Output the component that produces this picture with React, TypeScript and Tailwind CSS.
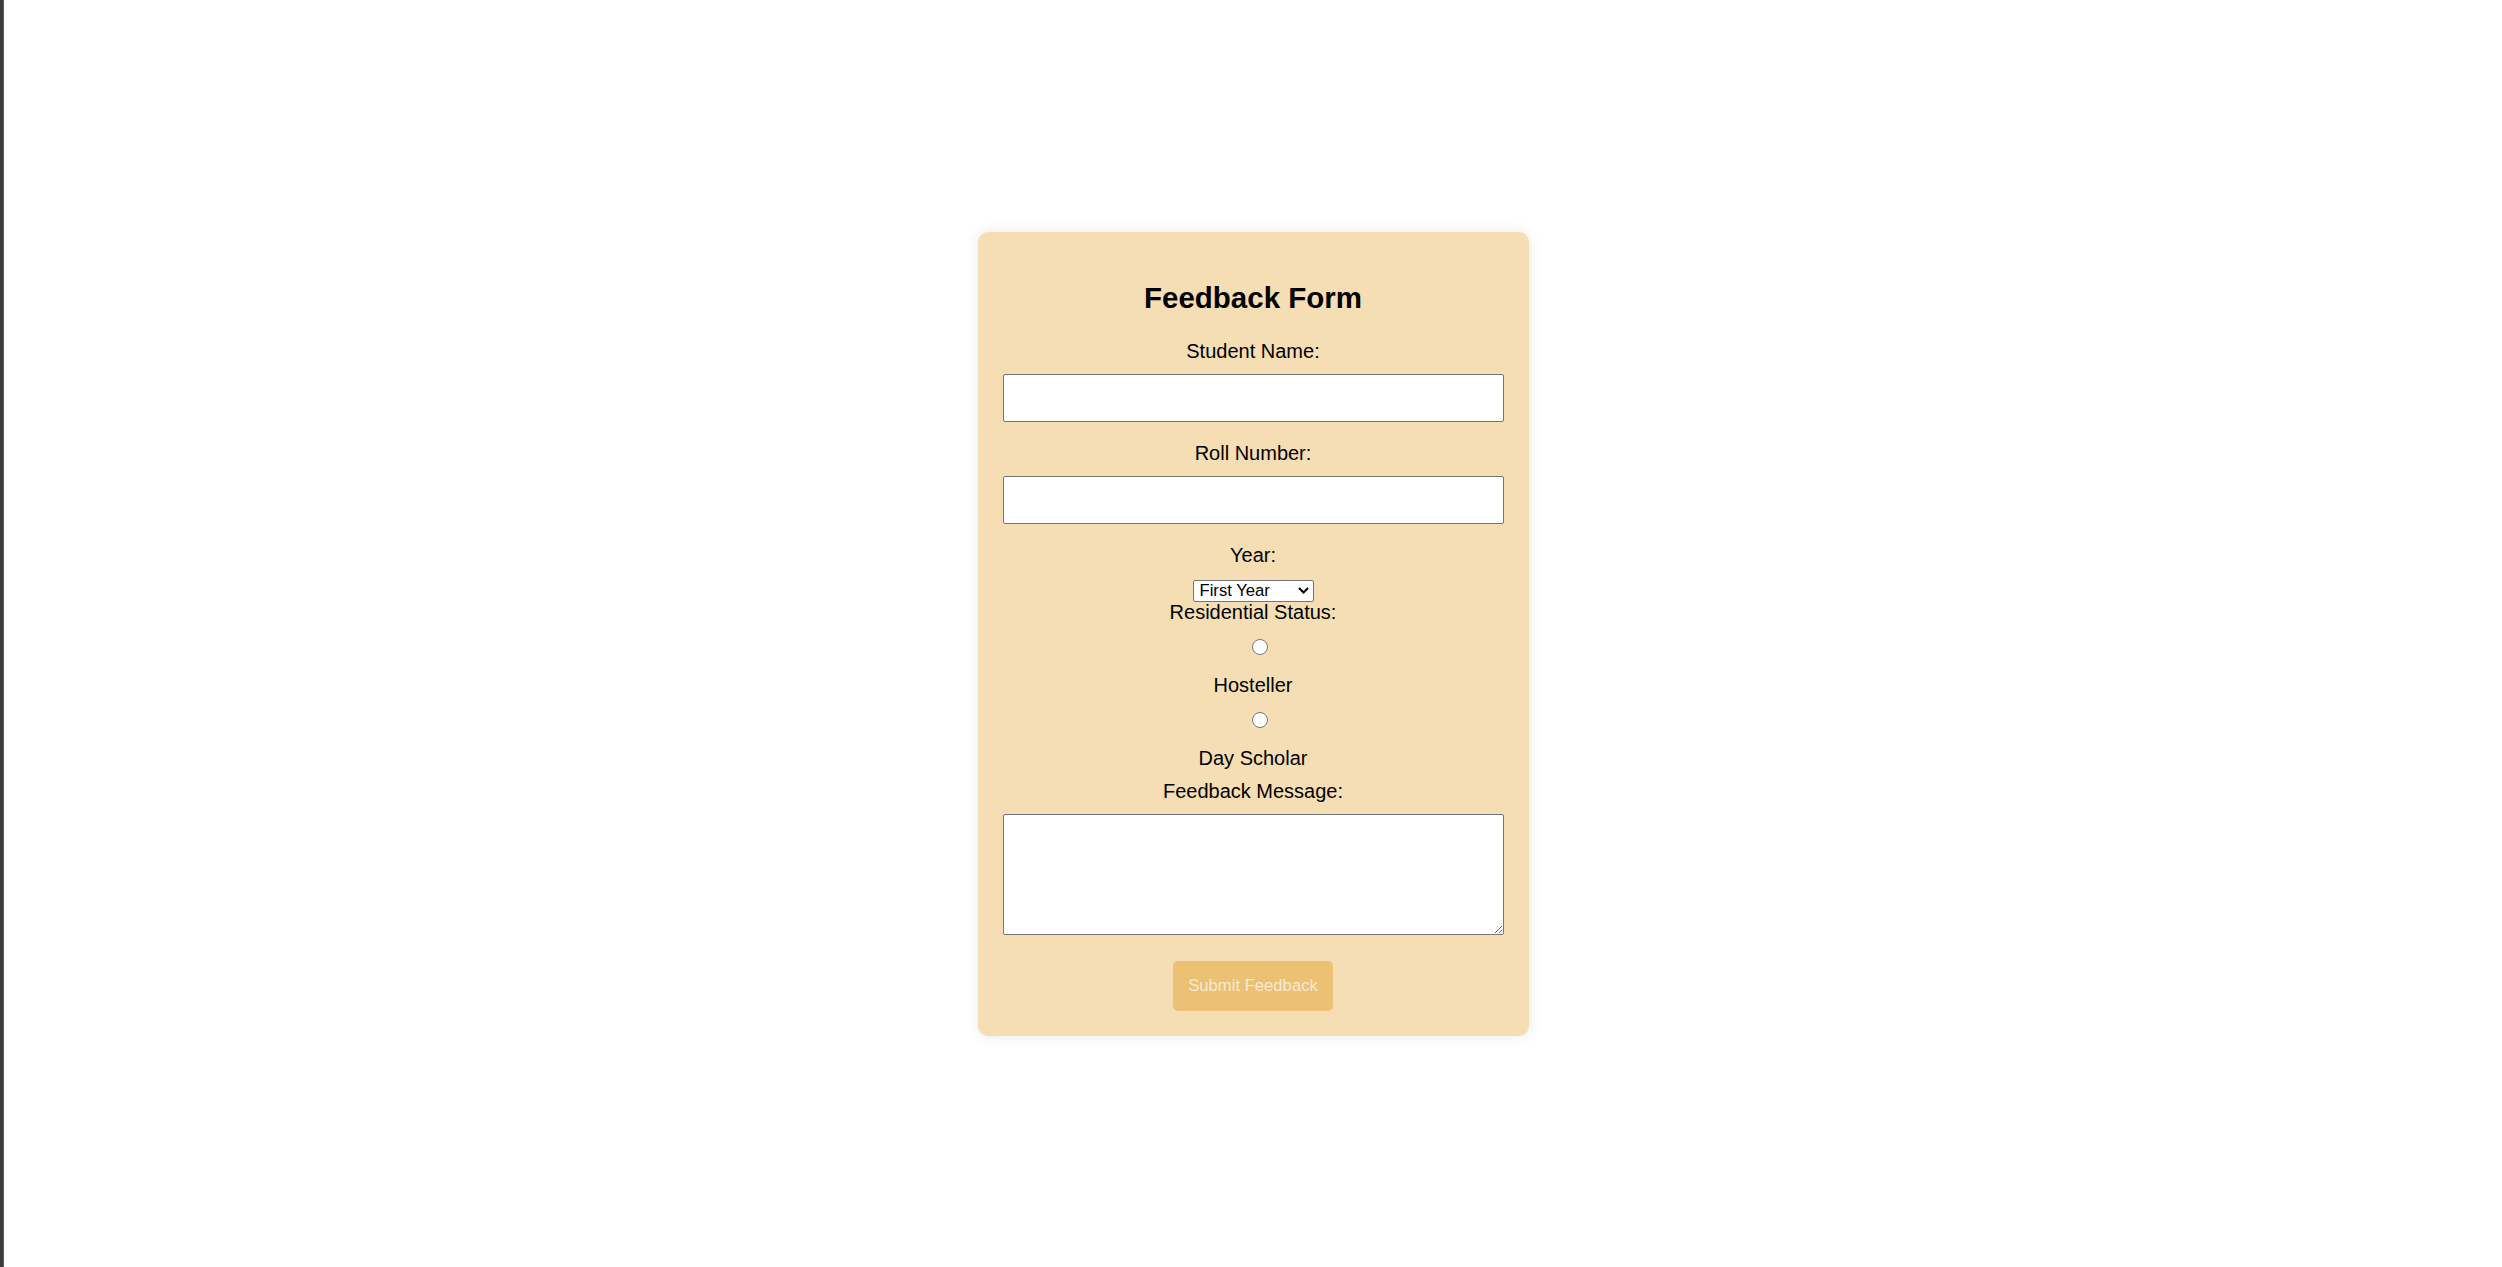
import { useState } from "react";

const labelCls = "block text-[20px] leading-[23px] text-black";
const fieldCls =
  "block w-full h-[48px] bg-white border border-[#767676] rounded-[2px] px-[10px] text-[16.67px] outline-none";

function Radio({ checked, onClick, className }: { checked: boolean; onClick: () => void; className?: string }) {
  return (
    <button
      type="button"
      onClick={onClick}
      className={`flex items-center justify-center w-[16px] h-[16px] rounded-full bg-white border-[1.5px] border-[#767676] ${className ?? ""}`}
    >
      {checked && <span className="w-[8px] h-[8px] rounded-full bg-[#0075ff]" />}
    </button>
  );
}

export default function App() {
  const [residence, setResidence] = useState("");
  const [year, setYear] = useState("First Year");

  return (
    <div className="flex h-[1267px] w-full font-['Liberation_Sans',Arial,sans-serif]">
      <div className="w-[4px] bg-[#3c3c3c] border-r border-[#5a5a5a]" />
      <div className="flex flex-1 items-center justify-center bg-white">
        <form
          onSubmit={(e) => e.preventDefault()}
          className="flex flex-col items-center w-[551px] px-[25px] pt-[25px] pb-[25px] bg-[#f5deb3] rounded-[10px] shadow-[0_0_14px_rgba(0,0,0,0.09)]"
        >
          <h2 className="mt-[25px] h-[32px] text-[29.5px] leading-[32px] font-bold text-black">
            Feedback Form
          </h2>

          <label className={`${labelCls} mt-[26px]`}>Student Name:</label>
          <input type="text" className={`${fieldCls} mt-[11px]`} />

          <label className={`${labelCls} mt-[20px]`}>Roll Number:</label>
          <input type="text" className={`${fieldCls} mt-[11px]`} />

          <label className={`${labelCls} mt-[20px]`}>Year:</label>
          <div className="relative mt-[12px] w-[121px] h-[22px]">
            <select
              value={year}
              onChange={(e) => setYear(e.target.value)}
              className="appearance-none w-full h-full bg-white border border-[#767676] rounded-[2px] pl-[6px] text-[16.67px] leading-[20px] text-black outline-none"
            >
              <option>First Year</option>
              <option>Second Year</option>
              <option>Third Year</option>
              <option>Fourth Year</option>
            </select>
            <svg
              className="pointer-events-none absolute right-[5px] top-[8px]"
              width="11"
              height="7"
              viewBox="0 0 11 7"
              fill="none"
            >
              <path d="M1 1l4.5 4.5L10 1" stroke="#000" strokeWidth="2" />
            </svg>
          </div>

          <label className={labelCls}>Residential Status:</label>
          <Radio
            className="mt-[15px] ml-[13px]"
            checked={residence === "hosteller"}
            onClick={() => setResidence("hosteller")}
          />
          <span className={`${labelCls} mt-[19px]`}>Hosteller</span>
          <Radio
            className="mt-[15px] ml-[13px]"
            checked={residence === "day"}
            onClick={() => setResidence("day")}
          />
          <span className={`${labelCls} mt-[19px]`}>Day Scholar</span>

          <label className={`${labelCls} mt-[10px]`}>Feedback Message:</label>
          <textarea className="block w-full h-[121px] mt-[11px] bg-white border border-[#767676] rounded-[2px] p-[10px] text-[16.67px] outline-none" />

          <button
            type="submit"
            className="mt-[26px] w-[160px] h-[50px] rounded-[5px] bg-[#ecc173] text-[16.67px] text-[#f7e9d6]"
          >
            Submit Feedback
          </button>
        </form>
      </div>
    </div>
  );
}
